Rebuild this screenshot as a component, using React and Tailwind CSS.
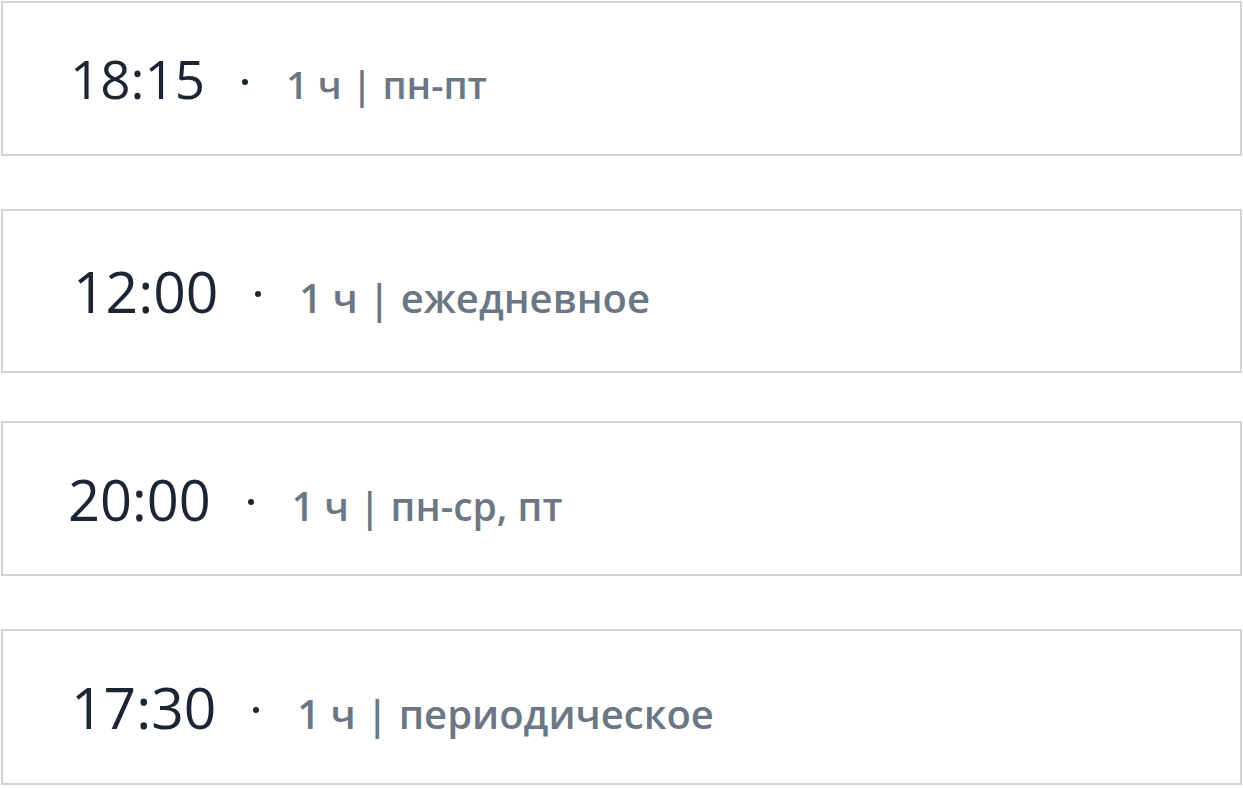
const slots = [
  { time: '18:15', repeat: 'пн-пт', height: 'h-[155px]', margin: 'mt-0', pad: 'pl-[67px]', timeSize: 'text-[53px]', subSize: 'text-[38px]' },
  { time: '12:00', repeat: 'ежедневное', height: 'h-[164px]', margin: 'mt-[53px]', pad: 'pl-[70px]', timeSize: 'text-[57px]', subSize: 'text-[40px]' },
  { time: '20:00', repeat: 'пн-ср, пт', height: 'h-[155px]', margin: 'mt-[48px]', pad: 'pl-[65px]', timeSize: 'text-[56px]', subSize: 'text-[39px]' },
  { time: '17:30', repeat: 'периодическое', height: 'h-[156px]', margin: 'mt-[53px]', pad: 'pl-[68px]', timeSize: 'text-[57px]', subSize: 'text-[40px]' },
];

export default function App() {
  return (
    <div
      className="w-[1243px] h-[788px] bg-white pt-[1px] pl-[1px]"
      style={{ fontFamily: '"Open Sans", "Noto Sans", sans-serif' }}
    >
      <div className="flex flex-col w-[1241px]">
        {slots.map((slot) => (
          <div
            key={slot.time}
            className={`${slot.height} ${slot.margin} ${slot.pad} flex items-center border-2 border-[#d3d3d3] bg-white`}
          >
            <div className="flex items-baseline">
              <span className={`${slot.timeSize} leading-none font-medium text-[#1c2533]`}>{slot.time}</span>
              <span className="ml-[37px] mr-[38px] w-[6px] h-[6px] rounded-full bg-[#1c2533] self-center mt-[6px]" />
              <span className={`${slot.subSize} leading-none font-semibold text-[#6b7785]`}>
                1 ч | {slot.repeat}
              </span>
            </div>
          </div>
        ))}
      </div>
    </div>
  );
}
